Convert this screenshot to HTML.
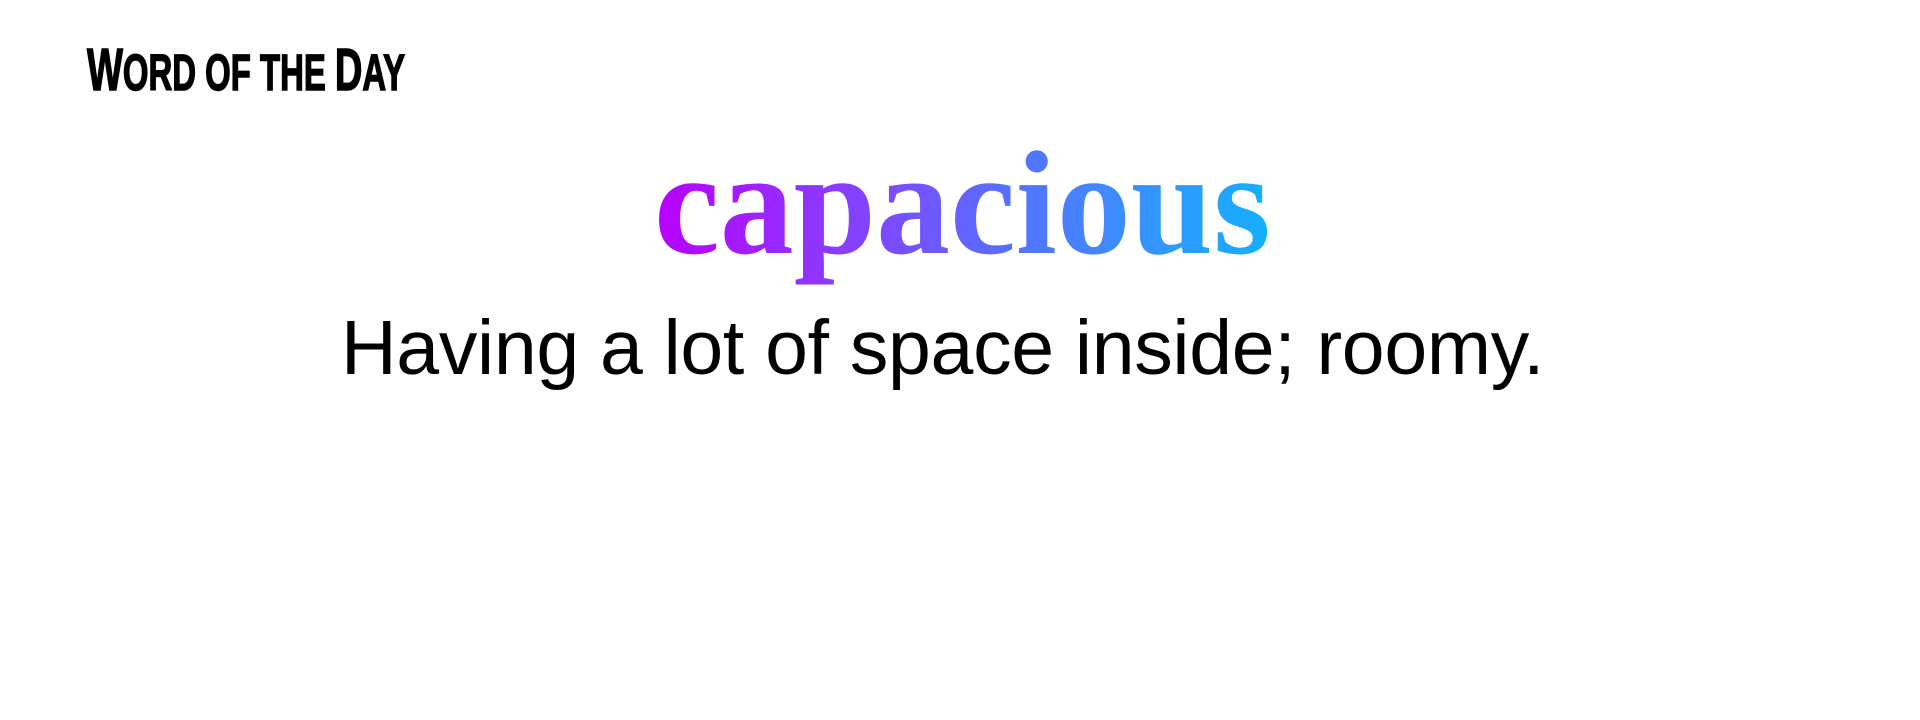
<!DOCTYPE html>
<html><head><meta charset="utf-8"><style>
html,body{margin:0;padding:0;background:#fff;width:1920px;height:720px;overflow:hidden;position:relative}
.t{position:absolute;left:87px;top:70px;transform-origin:0 100%;transform:scaleX(.645);font-family:"Liberation Sans Narrow","Liberation Sans",sans-serif;font-weight:bold;color:#000;white-space:nowrap;line-height:0;-webkit-text-stroke:1.5px #000}
.t .b{font-size:59px}.t .s{font-size:51px}
.w{position:absolute;left:654px;line-height:0;white-space:nowrap}
.w span{display:inline-block;font-family:"Liberation Serif",serif;font-weight:bold;font-size:148px;
background:linear-gradient(90deg,#b800ff 0%,#8a3cff 30%,#5a6cff 55%,#3d8cff 75%,#14b0ff 100%);-webkit-background-clip:text;background-clip:text;color:transparent;line-height:1.2;vertical-align:baseline}
.d{position:absolute;left:341px;top:348px;line-height:0;white-space:nowrap;font-family:"Liberation Sans",sans-serif;font-size:77px;letter-spacing:-0.3px;color:#000}
</style></head><body>
<div class="t"><span class="b">W</span><span class="s">ORD OF THE </span><span class="b">D</span><span class="s">AY</span></div>
<div class="w" style="top:116px"><span>capacious</span></div>
<div class="d">Having a lot of space inside; roomy.</div>
</body></html>
